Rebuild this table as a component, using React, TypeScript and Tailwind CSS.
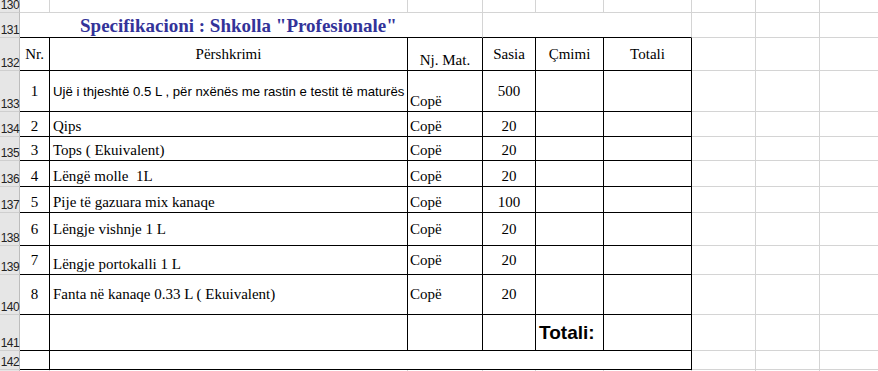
import type { ReactNode } from "react";

const SERIF = "font-['Liberation_Serif','Times_New_Roman',serif] text-[15px] leading-[19px]";
const SANS = "font-['Liberation_Sans',Arial,sans-serif]";

const VALIGN = {
  top: "items-start",
  center: "items-center",
  bottom: "items-end",
};

const HALIGN = {
  left: "justify-start",
  center: "justify-center",
};

const BORDERS = {
  black: "border-r-black border-b-black",
  gray: "border-r-[#d4d4d4] border-b-[#d4d4d4]",
  grayBlack: "border-r-[#d4d4d4] border-b-black",
};

type V = keyof typeof VALIGN;

function Cell({
  b = "gray",
  v = "bottom",
  h = "left",
  className = "",
  children,
}: {
  b?: keyof typeof BORDERS;
  v?: V;
  h?: keyof typeof HALIGN;
  className?: string;
  children?: ReactNode;
}) {
  return (
    <div
      className={`flex min-w-0 whitespace-pre border-r border-b ${BORDERS[b]} ${VALIGN[v]} ${HALIGN[h]} ${className}`}
    >
      {children}
    </div>
  );
}

function RowHead({ n }: { n: number }) {
  return (
    <div
      className={`flex items-end justify-end border-r border-b border-r-[#bdbdbd] border-b-[#cfcfcf] bg-[#e6e6e6] text-[12px] leading-[14px] tracking-[-0.6px] text-[#222] ${SANS}`}
    >
      {n}
    </div>
  );
}

function Blank() {
  return (
    <>
      <Cell />
      <Cell />
      <Cell />
    </>
  );
}

type Item = {
  n: string;
  d: string;
  q: string;
  v: [V, V, V, V];
  arial?: boolean;
};

const ITEMS: Item[] = [
  {
    n: "1",
    d: "Ujë i thjeshtë 0.5 L , për nxënës me rastin e testit të maturës",
    q: "500",
    v: ["center", "center", "bottom", "center"],
    arial: true,
  },
  { n: "2", d: "Qips", q: "20", v: ["bottom", "bottom", "bottom", "bottom"] },
  { n: "3", d: "Tops ( Ekuivalent)", q: "20", v: ["bottom", "bottom", "bottom", "bottom"] },
  { n: "4", d: "Lëngë molle  1L", q: "20", v: ["bottom", "bottom", "bottom", "bottom"] },
  { n: "5", d: "Pije të gazuara mix kanaqe", q: "100", v: ["bottom", "bottom", "bottom", "bottom"] },
  { n: "6", d: "Lëngje vishnje 1 L", q: "20", v: ["center", "center", "center", "center"] },
  { n: "7", d: "Lëngje portokalli 1 L", q: "20", v: ["center", "bottom", "center", "center"] },
  { n: "8", d: "Fanta në kanaqe 0.33 L ( Ekuivalent)", q: "20", v: ["center", "center", "center", "center"] },
];

export default function App() {
  return (
    <div className="h-[371px] w-[878px] overflow-hidden bg-white text-black">
      <div className="grid w-[884px] grid-cols-[20px_30px_358px_75px_53px_68px_88px_64px_64px_64px] grid-rows-[13px_25px_33px_41px_25px_24px_26px_26px_33px_29px_40px_36px_19px_20px]">
        {/* 130 */}
        <RowHead n={130} />
        <Cell />
        <Cell />
        <Cell />
        <Cell />
        <Cell />
        <Cell />
        <Blank />

        {/* 131 */}
        <RowHead n={131} />
        <Cell b="grayBlack" className="col-span-3 overflow-visible pb-[1px] pl-[60px]">
          <span className="font-['Liberation_Serif','Times_New_Roman',serif] text-[19px] font-bold leading-[21px] text-[#333399]">
            Specifikacioni : Shkolla "Profesionale"
          </span>
        </Cell>
        <Cell b="grayBlack" className="col-span-3" />
        <Blank />

        {/* 132 */}
        <RowHead n={132} />
        <Cell b="black" v="center" h="center" className={SERIF}>Nr.</Cell>
        <Cell b="black" v="center" h="center" className={SERIF}>Përshkrimi</Cell>
        <Cell b="black" v="bottom" h="center" className={SERIF}>Nj. Mat.</Cell>
        <Cell b="black" v="center" h="center" className={SERIF}>Sasia</Cell>
        <Cell b="black" v="center" h="center" className={SERIF}>Çmimi</Cell>
        <Cell b="black" v="center" h="center" className={SERIF}>Totali</Cell>
        <Blank />

        {ITEMS.map((it, i) => (
          <div key={it.n} className="contents">
            <RowHead n={133 + i} />
            <Cell b="black" v={it.v[0]} h="center" className={SERIF}>{it.n}</Cell>
            <Cell
              b="black"
              v={it.v[1]}
              className={
                it.arial
                  ? `pl-[3px] text-[13.2px] leading-[15px] ${SANS}`
                  : `pl-[3px] ${SERIF}`
              }
            >
              {it.d}
            </Cell>
            <Cell b="black" v={it.v[2]} className={`pl-[2px] ${SERIF}`}>Copë</Cell>
            <Cell b="black" v={it.v[3]} h="center" className={SERIF}>{it.q}</Cell>
            <Cell b="black" />
            <Cell b="black" />
            <Blank />
          </div>
        ))}

        {/* 141 */}
        <RowHead n={141} />
        <Cell b="black" />
        <Cell b="black" />
        <Cell b="black" />
        <Cell b="black" />
        <Cell b="black" v="center" className={`pl-[3px] text-[19px] font-bold leading-[22px] ${SANS}`}>
          Totali:
        </Cell>
        <Cell b="black" />
        <Blank />

        {/* 142 */}
        <RowHead n={142} />
        <Cell b="black" />
        <Cell b="black" className="col-span-5" />
        <Blank />

        {/* 143 */}
        <RowHead n={143} />
        <Cell />
        <Cell />
        <Cell />
        <Cell />
        <Cell />
        <Cell />
        <Blank />
      </div>
    </div>
  );
}
